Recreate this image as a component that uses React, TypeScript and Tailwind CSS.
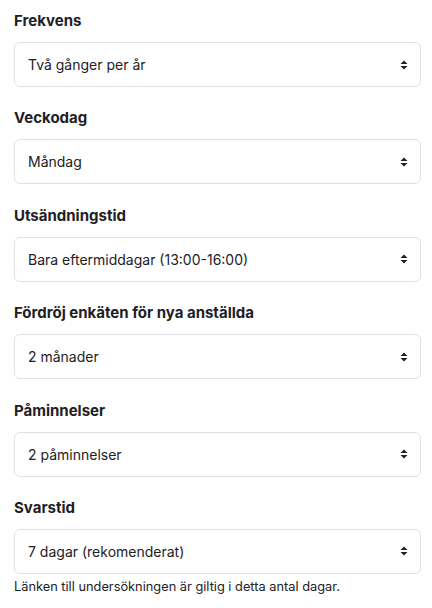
const fields = [
  { label: "Frekvens", value: "Två gånger per år" },
  { label: "Veckodag", value: "Måndag" },
  { label: "Utsändningstid", value: "Bara eftermiddagar (13:00-16:00)" },
  { label: "Fördröj enkäten för nya anställda", value: "2 månader" },
  { label: "Påminnelser", value: "2 påminnelser" },
  { label: "Svarstid", value: "7 dagar (rekomenderat)" },
];

function SortIcon() {
  return (
    <svg width="8" height="10" viewBox="0 0 8 10" className="shrink-0">
      <path d="M4 0.5 L7.5 4 H0.5 Z" fill="#1d2125" />
      <path d="M4 9.5 L7.5 6 H0.5 Z" fill="#1d2125" />
    </svg>
  );
}

export default function App() {
  return (
    <div className="min-h-[608px] bg-white pl-[14px] pr-[11px] pt-[10px] font-['Inter','Noto_Sans',sans-serif] text-[#1d2125]">
      {fields.map((f, i) => (
        <div key={f.label} className={i === 0 ? "" : "mt-[20.4px]"}>
          <div className="h-[22px] text-[15px] font-bold leading-[22px]">{f.label}</div>
          <div className="mt-[10px] flex h-[45px] items-center justify-between rounded-[6px] border border-[#dee2e6] pl-[13px] pr-[12px] text-[14px]">
            <span>{f.value}</span>
            <SortIcon />
          </div>
        </div>
      ))}
      <p className="mt-[3px] text-[12.8px] leading-[20px]">Länken till undersökningen är giltig i detta antal dagar.</p>
    </div>
  );
}
